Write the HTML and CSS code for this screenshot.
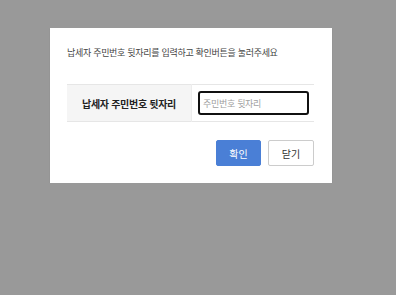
FILE: index.html
```html
<!DOCTYPE html>
<html lang="ko">
<head>
    <meta charset="UTF-8">
    <meta name="viewport" content="width=device-width, initial-scale=1.0">
    <title>주민번호 확인</title>
    <link rel="stylesheet" href="styles.css">
</head>
<body>
    <div class="dialog">
        <p class="guide">납세자 주민번호 뒷자리를 입력하고 확인버튼을 눌러주세요</p>

        <table class="form-table">
            <tr>
                <th>납세자 주민번호 뒷자리</th>
                <td><input type="password" class="ssn-input" placeholder="주민번호 뒷자리"></td>
            </tr>
        </table>

        <div class="actions">
            <button class="btn btn-primary">확인</button>
            <button class="btn">닫기</button>
        </div>
    </div>
</body>
</html>
```

FILE: styles.css
```css
* {
    margin: 0;
    padding: 0;
    box-sizing: border-box;
}

body {
    font-family: 'Noto Sans CJK KR', 'Noto Sans', sans-serif;
    background-color: #999999;
    color: #333333;
}

.dialog {
    width: 282px;
    height: 155px;
    margin: 28px 0 0 50px;
    padding: 0 18px 0 17px;
    background-color: #ffffff;
    box-shadow: 0 1px 1px rgba(0, 0, 0, 0.15);
}

.guide {
    padding-top: 18px;
    font-size: 9px;
    line-height: 14px;
    color: #444444;
    letter-spacing: -0.3px;
}

.form-table {
    width: 100%;
    margin-top: 24px;
    border-collapse: collapse;
    border-top: 1px solid #e6e6e6;
    border-bottom: 1px solid #e6e6e6;
}

.form-table th {
    width: 125px;
    height: 37px;
    background-color: #f5f5f5;
    font-size: 10px;
    font-weight: bold;
    color: #222222;
    text-align: center;
    letter-spacing: -0.3px;
    border-right: 1px solid #ededed;
}

.form-table td {
    padding: 0 5px 0 6px;
}

.ssn-input {
    display: block;
    width: 111px;
    height: 24px;
    padding: 0 3px;
    border: 2px solid #111111;
    border-radius: 3px;
    font-family: inherit;
    font-size: 9px;
    letter-spacing: -0.3px;
    outline: none;
}

.ssn-input::placeholder {
    color: #a0a0a0;
}

.actions {
    display: flex;
    justify-content: flex-end;
    gap: 7px;
    margin-top: 18px;
}

.btn {
    width: 46px;
    height: 26px;
    border: 1px solid #cccccc;
    border-radius: 2px;
    background-color: #ffffff;
    font-family: inherit;
    font-size: 10px;
    color: #333333;
}

.btn-primary {
    width: 45px;
    background-color: #4a7fd6;
    border-color: #4a7fd6;
    color: #ffffff;
}
```
